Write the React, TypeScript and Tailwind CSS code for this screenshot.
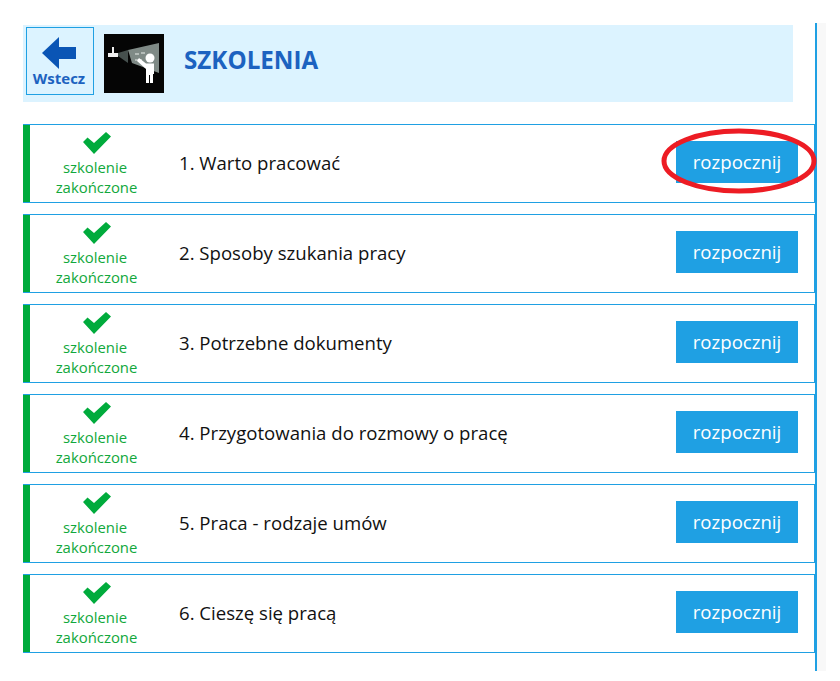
import React from 'react'

const trainings = [
  '1. Warto pracować',
  '2. Sposoby szukania pracy',
  '3. Potrzebne dokumenty',
  '4. Przygotowania do rozmowy o pracę',
  '5. Praca - rodzaje umów',
  '6. Cieszę się pracą',
]

function TrainerIcon() {
  return (
    <svg width="60" height="60" viewBox="0 0 60 60" className="block shrink-0">
      <rect width="60" height="59" fill="#050505" />
      {/* Projector */}
      <path d="M8 13 H10 V19 H14 V23 H4 V19 H8 Z" fill="#f0f0f0" />
      {/* Beam */}
      <path d="M14 19 L24 16 V29 L14 22 Z" fill="#46504e" />
      {/* Screen */}
      <path d="M24 16 L55 9 V39 L28 29 Z" fill="#7f8a86" />
      <rect x="31" y="19" width="4" height="2" fill="#b4bcb8" />
      <rect x="37" y="18" width="4" height="2" fill="#b4bcb8" />
      <rect x="31" y="25" width="7" height="2" fill="#b4bcb8" />
      {/* Person */}
      <circle cx="46" cy="24" r="4.5" fill="#ffffff" />
      <path d="M35 24 L42 29.5 H50 V40 H49 V49 H46 V41 H45 V49 H42 V35 L33 27 Z" fill="#ffffff" />
    </svg>
  )
}

function TrainingRow({ title, highlighted }: { title: string; highlighted?: boolean }) {
  return (
    <div className="relative flex h-[79px] items-center border border-l-0 border-[#1fa0e3]">
      <div className="w-[7px] self-stretch bg-[#00ab3c]" />
      <div className="flex w-[133px] flex-col items-center pt-[2px] text-center text-[14.9px] leading-[20px] text-[#11a83c]">
        <svg width="28" height="22" viewBox="0 0 28 22" className="mb-[3px]">
          <path d="M0 10 L4.5 5.5 L11 11 L23 0 L28 4.5 L11 22 Z" fill="#00ab3c" />
        </svg>
        <span className="pr-[3px]">szkolenie</span>
        <span>zakończone</span>
      </div>
      <div className="flex-1 pb-[2px] pl-[16px] text-[18.6px] text-[#111111]">{title}</div>
      <button className="mb-[3px] mr-[16px] h-[42px] w-[122px] bg-[#1fa0e3] text-[18.6px] text-white">rozpocznij</button>
      {highlighted && (
        <svg width="156" height="68" viewBox="0 0 156 68" className="absolute right-[-3px] top-[2px]">
          <ellipse cx="78" cy="34" rx="75" ry="30" fill="none" stroke="#ed1c24" strokeWidth="5" />
        </svg>
      )}
    </div>
  )
}

export default function App() {
  return (
    <div className="h-[681px] w-[840px] bg-white pt-[23px] font-['Open_Sans',sans-serif]">
      <div className="flex h-[648px]">
        <div className="w-[817px] border-r-2 border-[#1fa0e3] pl-[23px] pt-[2px]">
          <header className="flex h-[77px] w-[770px] bg-[#dcf3ff] pl-[3px] pt-[2px]">
            <a className="flex h-[68px] w-[68px] flex-col items-center border border-[#1fa0e3] pr-[2px] pt-[9px]">
              <svg width="34" height="32" viewBox="0 0 34 32" className="block shrink-0">
                <path d="M17 0 V10 H34 V22 H17 V32 L0 16 Z" fill="#0a55b5" />
              </svg>
              <span className="text-[15px] font-bold leading-[18px] text-[#1c62c0]">Wstecz</span>
            </a>
            <div className="ml-[10px] mt-[7px]">
              <TrainerIcon />
            </div>
            <h1 className="ml-[20px] self-center pb-[8px] text-[24.2px] font-bold text-[#1c62c0]">SZKOLENIA</h1>
          </header>
          <div className="mt-[22px] flex flex-col gap-[11px]">
            {trainings.map((title, i) => (
              <TrainingRow key={title} title={title} highlighted={i === 0} />
            ))}
          </div>
        </div>
        <div className="w-[9px] bg-[#f8f8f8]" />
      </div>
    </div>
  )
}
